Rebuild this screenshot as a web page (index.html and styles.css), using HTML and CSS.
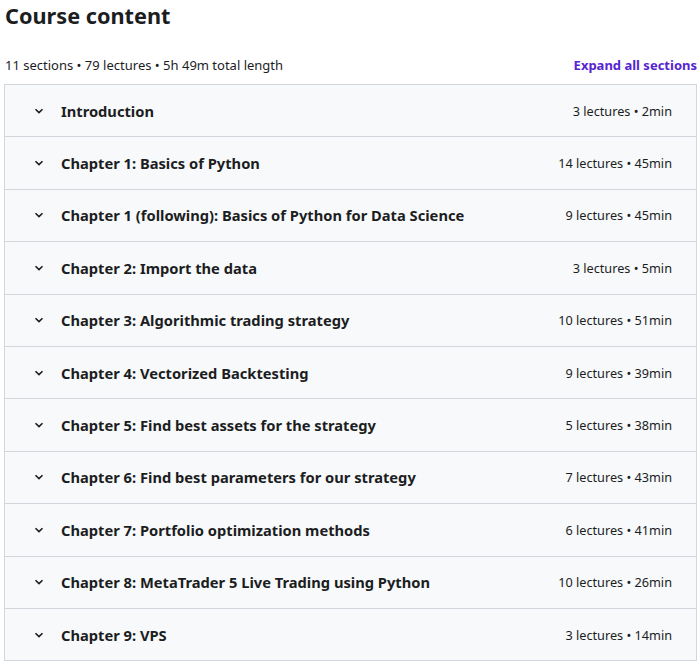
FILE: index.html
```html
<!DOCTYPE html>
<html lang="en">
  <head>
    <meta charset="UTF-8" />
    <meta name="viewport" content="width=device-width, initial-scale=1.0" />
    <title>Course content</title>
    <link rel="stylesheet" href="styles.css">
  </head>
  <body>
    <div class="curriculum">
      <h2 class="main_title">Course content</h2>

      <div class="summary">
        <span class="summary_text">11 sections &bull; 79 lectures &bull; 5h 49m total length</span>
        <button class="expand_btn" type="button">Expand all sections</button>
      </div>

      <div class="sections">
        <div class="section">
          <span class="chevron"><svg width="12" height="12" viewBox="0 0 12 12"><path d="M2.5 4.2 L6 7.6 L9.5 4.2" fill="none" stroke="#1c1d1f" stroke-width="1.6"/></svg></span>
          <span class="section_title">Introduction</span>
          <span class="section_info">3 lectures &bull; 2min</span>
        </div>
        <div class="section">
          <span class="chevron"><svg width="12" height="12" viewBox="0 0 12 12"><path d="M2.5 4.2 L6 7.6 L9.5 4.2" fill="none" stroke="#1c1d1f" stroke-width="1.6"/></svg></span>
          <span class="section_title">Chapter 1: Basics of Python</span>
          <span class="section_info">14 lectures &bull; 45min</span>
        </div>
        <div class="section">
          <span class="chevron"><svg width="12" height="12" viewBox="0 0 12 12"><path d="M2.5 4.2 L6 7.6 L9.5 4.2" fill="none" stroke="#1c1d1f" stroke-width="1.6"/></svg></span>
          <span class="section_title">Chapter 1 (following): Basics of Python for Data Science</span>
          <span class="section_info">9 lectures &bull; 45min</span>
        </div>
        <div class="section">
          <span class="chevron"><svg width="12" height="12" viewBox="0 0 12 12"><path d="M2.5 4.2 L6 7.6 L9.5 4.2" fill="none" stroke="#1c1d1f" stroke-width="1.6"/></svg></span>
          <span class="section_title">Chapter 2: Import the data</span>
          <span class="section_info">3 lectures &bull; 5min</span>
        </div>
        <div class="section">
          <span class="chevron"><svg width="12" height="12" viewBox="0 0 12 12"><path d="M2.5 4.2 L6 7.6 L9.5 4.2" fill="none" stroke="#1c1d1f" stroke-width="1.6"/></svg></span>
          <span class="section_title">Chapter 3: Algorithmic trading strategy</span>
          <span class="section_info">10 lectures &bull; 51min</span>
        </div>
        <div class="section">
          <span class="chevron"><svg width="12" height="12" viewBox="0 0 12 12"><path d="M2.5 4.2 L6 7.6 L9.5 4.2" fill="none" stroke="#1c1d1f" stroke-width="1.6"/></svg></span>
          <span class="section_title">Chapter 4: Vectorized Backtesting</span>
          <span class="section_info">9 lectures &bull; 39min</span>
        </div>
        <div class="section">
          <span class="chevron"><svg width="12" height="12" viewBox="0 0 12 12"><path d="M2.5 4.2 L6 7.6 L9.5 4.2" fill="none" stroke="#1c1d1f" stroke-width="1.6"/></svg></span>
          <span class="section_title">Chapter 5: Find best assets for the strategy</span>
          <span class="section_info">5 lectures &bull; 38min</span>
        </div>
        <div class="section">
          <span class="chevron"><svg width="12" height="12" viewBox="0 0 12 12"><path d="M2.5 4.2 L6 7.6 L9.5 4.2" fill="none" stroke="#1c1d1f" stroke-width="1.6"/></svg></span>
          <span class="section_title">Chapter 6: Find best parameters for our strategy</span>
          <span class="section_info">7 lectures &bull; 43min</span>
        </div>
        <div class="section">
          <span class="chevron"><svg width="12" height="12" viewBox="0 0 12 12"><path d="M2.5 4.2 L6 7.6 L9.5 4.2" fill="none" stroke="#1c1d1f" stroke-width="1.6"/></svg></span>
          <span class="section_title">Chapter 7: Portfolio optimization methods</span>
          <span class="section_info">6 lectures &bull; 41min</span>
        </div>
        <div class="section">
          <span class="chevron"><svg width="12" height="12" viewBox="0 0 12 12"><path d="M2.5 4.2 L6 7.6 L9.5 4.2" fill="none" stroke="#1c1d1f" stroke-width="1.6"/></svg></span>
          <span class="section_title">Chapter 8: MetaTrader 5 Live Trading using Python</span>
          <span class="section_info">10 lectures &bull; 26min</span>
        </div>
        <div class="section">
          <span class="chevron"><svg width="12" height="12" viewBox="0 0 12 12"><path d="M2.5 4.2 L6 7.6 L9.5 4.2" fill="none" stroke="#1c1d1f" stroke-width="1.6"/></svg></span>
          <span class="section_title">Chapter 9: VPS</span>
          <span class="section_info">3 lectures &bull; 14min</span>
        </div>
      </div>
    </div>
  </body>
</html>
```

FILE: styles.css
```css
body {
  margin: 0;
  padding: 0 3px 0 4px;
  background: #ffffff;
  font-family: "Noto Sans", "Open Sans", Arial, sans-serif;
  color: #1c1d1f;
}
.main_title {
  font-size: 21.7px;
  font-weight: 700;
  margin: 0;
  padding: 1px 0 0 1px;
  line-height: 30px;
}
.summary {
  display: flex;
  justify-content: space-between;
  align-items: center;
  margin-top: 21px;
  height: 26px;
  padding-left: 1px;
}
.summary_text {
  font-size: 13px;
}
.expand_btn {
  border: none;
  background: none;
  padding: 0;
  font-family: inherit;
  font-size: 13px;
  font-weight: 700;
  color: #5624d0;
  cursor: pointer;
}
.sections {
  margin-top: 6px;
  border: 1px solid #d1d7dc;
  border-bottom: none;
}
.section {
  display: flex;
  align-items: center;
  height: 51.4px;
  background: #f7f9fa;
  border-bottom: 1px solid #d1d7dc;
  padding: 0 24px 0 28px;
}
.chevron {
  display: flex;
  width: 12px;
  margin-right: 16px;
}
.section_title {
  flex: 1;
  font-size: 14.7px;
  font-weight: 700;
}
.section_info {
  font-size: 12.7px;
}
```
